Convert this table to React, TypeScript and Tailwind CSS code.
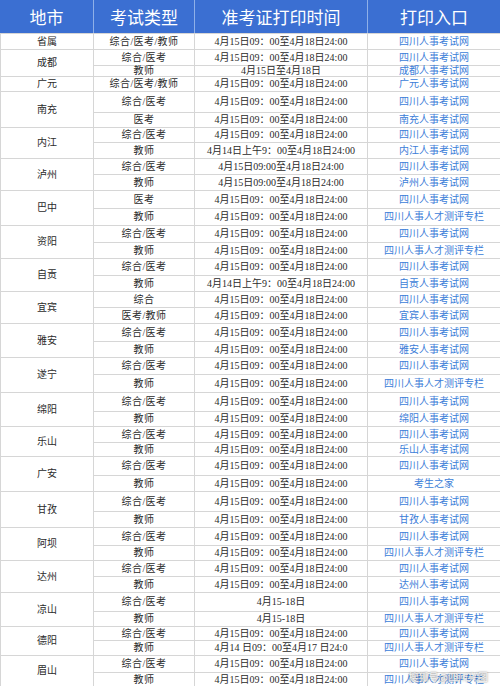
import React from "react";

type Sub = { type: string; time: string; link: string; h: string };
type Group = { city: string; rows: Sub[] };

const T = "4月15日09：00至4月18日24:00";
const SC = "四川人事考试网";
const CP = "四川人事人才测评专栏";

const groups: Group[] = [
  { city: "省属", rows: [{ type: "综合/医考/教师", time: T, link: SC, h: "h-[16px]" }] },
  {
    city: "成都",
    rows: [
      { type: "综合/医考", time: T, link: SC, h: "h-[16px]" },
      { type: "教师", time: "4月15日至4月18日", link: "成都人事考试网", h: "h-[11px]" },
    ],
  },
  { city: "广元", rows: [{ type: "综合/医考/教师", time: T, link: "广元人事考试网", h: "h-[15px]" }] },
  {
    city: "南充",
    rows: [
      { type: "综合/医考", time: T, link: SC, h: "h-[21px]" },
      { type: "医考", time: T, link: "南充人事考试网", h: "h-[15px]" },
    ],
  },
  {
    city: "内江",
    rows: [
      { type: "综合/医考", time: T, link: SC, h: "h-[15px]" },
      { type: "教师", time: "4月14日上午9：00至4月18日24:00", link: "内江人事考试网", h: "h-[16px]" },
    ],
  },
  {
    city: "泸州",
    rows: [
      { type: "综合/医考", time: "4月15日09:00至4月18日24:00", link: SC, h: "h-[16px]" },
      { type: "教师", time: "4月15日09:00至4月18日24:00", link: "泸州人事考试网", h: "h-[16px]" },
    ],
  },
  {
    city: "巴中",
    rows: [
      { type: "医考", time: T, link: SC, h: "h-[18px]" },
      { type: "教师", time: T, link: CP, h: "h-[17px]" },
    ],
  },
  {
    city: "资阳",
    rows: [
      { type: "综合/医考", time: T, link: SC, h: "h-[17px]" },
      { type: "教师", time: T, link: CP, h: "h-[16px]" },
    ],
  },
  {
    city: "自贡",
    rows: [
      { type: "综合/医考", time: T, link: SC, h: "h-[17px]" },
      { type: "教师", time: "4月14日上午9：00至4月18日24:00", link: "自贡人事考试网", h: "h-[16px]" },
    ],
  },
  {
    city: "宜宾",
    rows: [
      { type: "综合", time: T, link: SC, h: "h-[16px]" },
      { type: "医考/教师", time: T, link: "宜宾人事考试网", h: "h-[16px]" },
    ],
  },
  {
    city: "雅安",
    rows: [
      { type: "综合/医考", time: T, link: SC, h: "h-[18px]" },
      { type: "教师", time: T, link: "雅安人事考试网", h: "h-[16px]" },
    ],
  },
  {
    city: "遂宁",
    rows: [
      { type: "综合/医考", time: T, link: SC, h: "h-[17px]" },
      { type: "教师", time: T, link: CP, h: "h-[18px]" },
    ],
  },
  {
    city: "绵阳",
    rows: [
      { type: "综合/医考", time: T, link: SC, h: "h-[19px]" },
      { type: "教师", time: T, link: "绵阳人事考试网", h: "h-[15px]" },
    ],
  },
  {
    city: "乐山",
    rows: [
      { type: "综合/医考", time: T, link: SC, h: "h-[16px]" },
      { type: "教师", time: T, link: "乐山人事考试网", h: "h-[14px]" },
    ],
  },
  {
    city: "广安",
    rows: [
      { type: "综合/医考", time: T, link: SC, h: "h-[19px]" },
      { type: "教师", time: T, link: "考生之家", h: "h-[16px]" },
    ],
  },
  {
    city: "甘孜",
    rows: [
      { type: "综合/医考", time: T, link: SC, h: "h-[20px]" },
      { type: "教师", time: T, link: "甘孜人事考试网", h: "h-[16px]" },
    ],
  },
  {
    city: "阿坝",
    rows: [
      { type: "综合/医考", time: T, link: SC, h: "h-[18px]" },
      { type: "教师", time: T, link: CP, h: "h-[15px]" },
    ],
  },
  {
    city: "达州",
    rows: [
      { type: "综合/医考", time: T, link: SC, h: "h-[16px]" },
      { type: "教师", time: T, link: "达州人事考试网", h: "h-[16px]" },
    ],
  },
  {
    city: "凉山",
    rows: [
      { type: "综合/医考", time: "4月15-18日", link: SC, h: "h-[19px]" },
      { type: "教师", time: "4月15-18日", link: CP, h: "h-[15px]" },
    ],
  },
  {
    city: "德阳",
    rows: [
      { type: "综合/医考", time: T, link: SC, h: "h-[14px]" },
      { type: "教师", time: "4月14 日09：00至4月17 日24:0", link: CP, h: "h-[15px]" },
    ],
  },
  {
    city: "眉山",
    rows: [
      { type: "综合/医考", time: T, link: SC, h: "h-[17px]" },
      { type: "教师", time: T, link: CP, h: "h-[14px]" },
    ],
  },
];

const cell = "flex items-center justify-center border-r border-[#d6d6d6] whitespace-nowrap";

export default function App() {
  return (
    <div
      className="w-[500px] h-[686px] overflow-hidden bg-white relative"
      style={{ fontFamily: '"Liberation Serif", "Noto Sans CJK SC", serif' }}
    >
      <div
        className="flex h-[33px] bg-[#3b6fd2] text-white text-[17px] leading-none"
        style={{ fontFamily: '"Noto Sans CJK SC", sans-serif' }}
      >
        <div className="w-[94px] flex items-center justify-center border-r border-[#8fb0e8]">地市</div>
        <div className="w-[101px] flex items-center justify-center border-r border-[#8fb0e8]">考试类型</div>
        <div className="w-[173px] flex items-center justify-center border-r border-[#8fb0e8]">准考证打印时间</div>
        <div className="flex-1 flex items-center justify-center">打印入口</div>
      </div>

      {groups.map((g) => (
        <div key={g.city} className="flex text-[10px] leading-none text-[#2b2b2b]">
          <div className={`${cell} w-[94px] border-l border-t`}>{g.city}</div>
          <div className="flex-1 flex flex-col">
            {g.rows.map((r, i) => (
              <div key={i} className={`flex ${r.h} border-t border-[#d6d6d6]`}>
                <div className={`${cell} w-[101px] tracking-[0.4px]`}>{r.type}</div>
                <div className={`${cell} w-[173px]`}>{r.time}</div>
                <div className="flex-1 flex items-center justify-center text-[#3b7dd8] whitespace-nowrap">
                  {r.link}
                </div>
              </div>
            ))}
          </div>
        </div>
      ))}

      <div
        className="absolute right-[12px] bottom-[4px] text-[10px] leading-none text-white/85 [text-shadow:0_0_2px_rgba(0,0,0,0.6)]"
        style={{ fontFamily: '"Noto Sans CJK SC", sans-serif' }}
      >
        搜狐号@四川兴图
      </div>
    </div>
  );
}
